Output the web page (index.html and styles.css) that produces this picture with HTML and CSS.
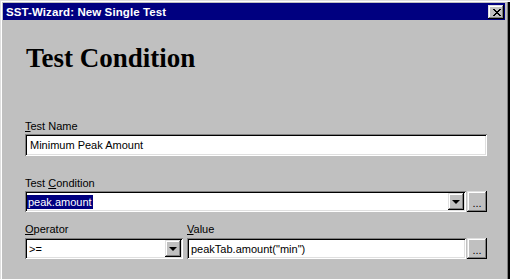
FILE: index.html
```html
<!DOCTYPE html>
<html lang="en">
<head>
  <meta charset="UTF-8">
  <title>SST-Wizard: New Single Test</title>
  <link rel="stylesheet" href="styles.css">
</head>
<body>
  <div class="window">
    <div class="titlebar">
      <span class="title">SST-Wizard: New Single Test</span>
      <button class="close raised">
        <svg width="8" height="7" viewBox="0 0 8 7">
          <path d="M0 0h2v1h1v1h2v-1h1v-1h2v1h-1v1h-1v1h-1v1h1v1h1v1h1v1h-2v-1h-1v-1h-2v1h-1v1h-2v-1h1v-1h1v-1h1v-1h-1v-1h-1v-1h-1z" fill="#000"/>
        </svg>
      </button>
    </div>

    <div class="content">
      <h1>Test Condition</h1>

      <div class="field first">
        <label><u>T</u>est Name</label>
        <div class="textbox sunken">Minimum Peak Amount</div>
      </div>

      <div class="field second">
        <label>Test <u>C</u>ondition</label>
        <div class="row">
          <div class="combo sunken grow">
            <span class="selected">peak.amount</span>
            <span class="drop raised"><i class="arrow"></i></span>
          </div>
          <button class="more raised">...</button>
        </div>
      </div>

      <div class="row third">
        <div class="field operator">
          <label><u>O</u>perator</label>
          <div class="combo sunken">
            <span class="value">&gt;=</span>
            <span class="drop raised"><i class="arrow"></i></span>
          </div>
        </div>
        <div class="field grow">
          <label><u>V</u>alue</label>
          <div class="row">
            <div class="textbox sunken grow small">peakTab.amount("min")</div>
            <button class="more raised">...</button>
          </div>
        </div>
      </div>
    </div>
  </div>
</body>
</html>
```

FILE: styles.css
```css
/* Reset */
* {
  margin: 0;
  padding: 0;
  box-sizing: border-box;
}

body {
  background-color: #c0c0c0;
  font-family: "Liberation Sans", Arial, sans-serif;
  font-size: 11px;
  color: #000;
}

/* Window frame */
.window {
  width: 510px;
  height: 279px;
  padding: 3px 5px 0 3px;
  background-color: #c0c0c0;
  box-shadow: inset 1px 1px 0 #dfdfdf, inset 2px 2px 0 #fff,
              inset -2px 0 0 #000, inset -3px 0 0 #808080;
  overflow: hidden;
}

.titlebar {
  height: 17px;
  background-color: #000080;
  color: #fff;
  display: flex;
  align-items: center;
  justify-content: space-between;
  padding-left: 3px;
}

.title {
  font-weight: bold;
  font-size: 11.5px;
  letter-spacing: 0.1px;
}

/* 3D borders */
.raised {
  background-color: #c0c0c0;
  box-shadow: inset -1px -1px 0 #000, inset 1px 1px 0 #dfdfdf,
              inset -2px -2px 0 #808080, inset 2px 2px 0 #fff;
  border: none;
}

.sunken {
  background-color: #fff;
  box-shadow: inset 1px 1px 0 #808080, inset -1px -1px 0 #fff,
              inset 2px 2px 0 #000, inset -2px -2px 0 #dfdfdf;
}

.close {
  width: 16px;
  height: 14px;
  margin: 1px 1px 0 0;
  display: flex;
  align-items: center;
  justify-content: center;
  padding-left: 1px;
}

/* Content */
.content {
  padding: 0 18px 0 22px;
}

h1 {
  font-family: "Liberation Serif", "Times New Roman", serif;
  font-size: 27px;
  line-height: 30px;
  font-weight: bold;
  margin-top: 23px;
  padding-left: 1px;
}

.field label {
  display: block;
  line-height: 13px;
  height: 13px;
  margin-bottom: 1px;
}

.field u {
  text-decoration: underline;
}

.first {
  margin-top: 47px;
}

.second {
  margin-top: 21px;
}

.third {
  margin-top: 11px;
}

.third .field label {
  margin-bottom: 2px;
}

.row {
  display: flex;
  align-items: stretch;
}

.grow {
  flex: 1;
}

.textbox {
  height: 22px;
  display: flex;
  align-items: center;
  padding-left: 5px;
}

.textbox.small {
  height: 21px;
  padding-left: 4px;
}

.combo {
  height: 21px;
  display: flex;
  align-items: center;
  justify-content: space-between;
  padding: 2px;
}

.selected {
  background-color: #000080;
  color: #fff;
  line-height: 14px;
  padding: 0 1px;
}

.value {
  padding-left: 2px;
}

.drop {
  width: 16px;
  height: 17px;
  display: flex;
  align-items: center;
  justify-content: center;
}

.arrow {
  width: 0;
  height: 0;
  border-left: 4px solid transparent;
  border-right: 4px solid transparent;
  border-top: 4px solid #000;
  margin-left: -1px;
}

.more {
  width: 20px;
  height: 21px;
  margin-left: 1px;
  font-family: "Liberation Sans", Arial, sans-serif;
  font-size: 11px;
  line-height: 18px;
  padding-top: 2px;
}

.operator {
  width: 158px;
  margin-right: 4px;
}
```
